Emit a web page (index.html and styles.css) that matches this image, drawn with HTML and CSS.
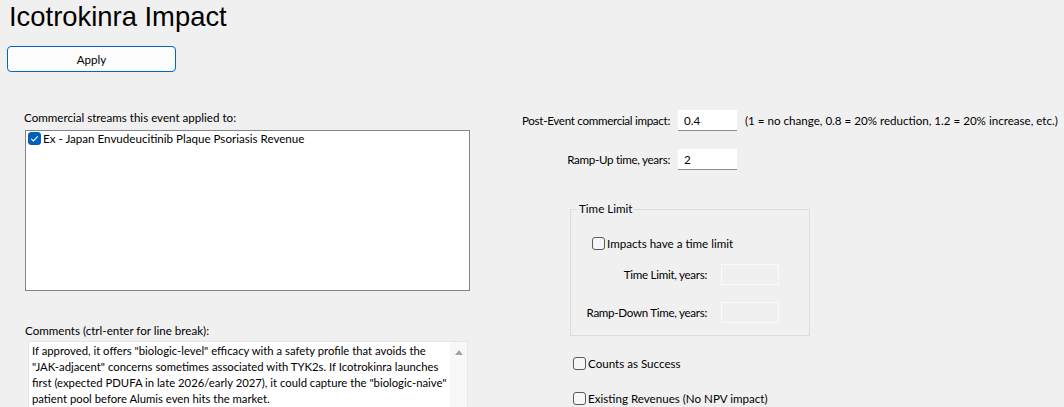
FILE: index.html
```html
<!DOCTYPE html>
<html>
<head>
    <link rel="stylesheet" href="styles.css">
</head>
<body>
    <div class="page">
        <h1 class="title">Icotrokinra Impact</h1>
        <button type="button" class="applyBtn">Apply</button>

        <div class="main">
            <div class="lcol">
                <div class="flabel">Commercial streams this event applied to:</div>
                <div class="streamlist">
                    <label class="checkrow">
                        <input type="checkbox" class="chk" checked>
                        <span>Ex - Japan Envudeucitinib Plaque Psoriasis Revenue</span>
                    </label>
                </div>

                <div class="flabel commlabel">Comments (ctrl-enter for line break):</div>
                <div class="commbox">
                    <div class="commtext">If approved, it offers "biologic-level" efficacy with a safety profile that avoids the "JAK-adjacent" concerns sometimes associated with TYK2s. If Icotrokinra launches first (expected PDUFA in late 2026/early 2027), it could capture the "biologic-naive" patient pool before Alumis even hits the market.</div>
                    <div class="scrollbar"><span class="scrollup"></span></div>
                </div>
            </div>

            <div class="rcol">
                <div class="frow">
                    <span class="rlabel">Post-Event commercial impact:</span>
                    <input type="text" class="numinput" value="0.4">
                    <span class="hint">(1 = no change, 0.8 = 20% reduction, 1.2 = 20% increase, etc.)</span>
                </div>
                <div class="frow row2">
                    <span class="rlabel">Ramp-Up time, years:</span>
                    <input type="text" class="numinput" value="2">
                </div>

                <fieldset class="timelimit">
                    <legend>Time Limit</legend>
                    <label class="checkrow tlcheck">
                        <input type="checkbox" class="chk">
                        <span>Impacts have a time limit</span>
                    </label>
                    <div class="frow tlrow">
                        <span class="tllabel">Time Limit, years:</span>
                        <input type="text" class="disinput" disabled>
                    </div>
                    <div class="frow tlrow tlrow2">
                        <span class="tllabel">Ramp-Down Time, years:</span>
                        <input type="text" class="disinput" disabled>
                    </div>
                </fieldset>

                <label class="checkrow success">
                    <input type="checkbox" class="chk">
                    <span>Counts as Success</span>
                </label>
                <label class="checkrow existing">
                    <input type="checkbox" class="chk">
                    <span>Existing Revenues (No NPV impact)</span>
                </label>
            </div>
        </div>
    </div>
</body>
</html>
```

FILE: styles.css
```css
*{
    margin: 0;
    padding: 0;
    box-sizing: border-box;
}
body {
    font-family: Lato, "Liberation Sans", sans-serif;
    font-size: 11.6px;
    color: #000;
    background-color: #f0f0f0;
    overflow: hidden;
}
.page{
    padding-top: 1px;
    height: 407px;
    overflow: hidden;
}
.title{
    font-family: "Liberation Sans", Arial, sans-serif;
    font-weight: normal;
    font-size: 27.4px;
    line-height: 32px;
    margin-left: 9px;
}
.applyBtn{
    display: block;
    margin-top: 13px;
    margin-left: 7px;
    width: 169px;
    height: 26px;
    background-color: #fdfdfd;
    border: 1px solid #0067c0;
    border-radius: 4px;
    font-family: inherit;
    font-size: 11.6px;
    color: #000;
}

.main{
    display: flex;
    margin-top: 38px;
}
.lcol{
    margin-left: 24px;
    width: 446px;
}
.flabel{
    line-height: 16px;
}
.streamlist{
    margin-top: 4px;
    margin-left: 1px;
    width: 445px;
    height: 161px;
    background-color: #fff;
    border: 1px solid #82838f;
    padding: 1px 2px;
}
.checkrow{
    display: flex;
    align-items: center;
    gap: 2px;
    line-height: 13px;
}
.chk{
    appearance: none;
    -webkit-appearance: none;
    width: 13px;
    height: 13px;
    border: 1px solid #5a5a5a;
    border-radius: 3px;
    background-color: #f7f7f7;
    flex-shrink: 0;
}
.chk:checked{
    border-color: #005fb8;
    background-color: #005fb8;
    background-image: url("data:image/svg+xml;utf8,<svg xmlns='http://www.w3.org/2000/svg' viewBox='0 0 13 13'><path d='M3.2 6.8 L5.4 9 L9.8 4.3' fill='none' stroke='white' stroke-width='1.1'/></svg>");
    background-size: 13px 13px;
    background-position: -1px -1px;
}
.commlabel{
    margin-top: 32px;
    margin-left: 1px;
}
.commbox{
    display: flex;
    margin-top: 2px;
    margin-left: 4px;
    width: 440px;
    height: 90px;
    background-color: #fff;
    border: 1px solid #e6e6e6;
}
.commtext{
    flex: 1;
    padding: 1px 3px;
    font-size: 11.3px;
    line-height: 16px;
}
.scrollbar{
    width: 17px;
    background-color: #f8f8f8;
    display: flex;
    justify-content: center;
    padding-top: 8px;
}
.scrollup{
    width: 0;
    height: 0;
    border-left: 4px solid transparent;
    border-right: 4px solid transparent;
    border-bottom: 5px solid #a3a3a3;
}

.rcol{
    margin-left: 30px;
}
.frow{
    display: flex;
    align-items: center;
}
.row2{
    margin-top: 18px;
}
.rlabel{
    width: 170px;
    text-align: right;
    white-space: nowrap;
    letter-spacing: -0.3px;
}
.numinput{
    margin-left: 8px;
    width: 59px;
    height: 21px;
    border: none;
    border-bottom: 1px solid #8c8c8c;
    background-color: #fff;
    padding-left: 6px;
    font-family: inherit;
    font-size: 11.6px;
    color: #000;
}
.hint{
    margin-left: 8px;
    white-space: nowrap;
}

.timelimit{
    margin-top: 31px;
    margin-left: 70px;
    width: 240px;
    border: 1px solid #dcdcdc;
    padding: 0 0 12px 0;
}
.timelimit legend{
    margin-left: 6px;
    padding: 0 2px;
    line-height: 16px;
}
.tlcheck{
    margin-top: 20px;
    margin-left: 21px;
}
.tlrow{
    margin-top: 14px;
}
.tlrow2{
    margin-top: 17px;
}
.tllabel{
    margin-left: 6px;
    width: 130px;
    text-align: right;
    white-space: nowrap;
    letter-spacing: -0.3px;
}
.disinput{
    margin-left: 14px;
    width: 58px;
    height: 21px;
    background-color: #f0f0f0;
    border: 1px solid #fafafa;
}
.success{
    margin-top: 21px;
    margin-left: 73px;
}
.existing{
    margin-top: 22px;
    margin-left: 73px;
}
```
